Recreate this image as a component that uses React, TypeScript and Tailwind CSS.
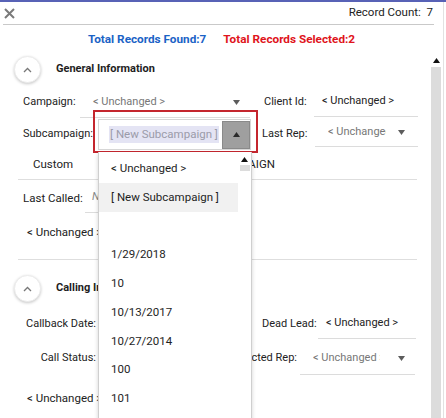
import React from "react"

function DownCaret() {
  return (
    <svg width="7" height="5" viewBox="0 0 7 5" className="shrink-0">
      <path d="M0 0h7L3.5 5z" fill="#5c5c5c" />
    </svg>
  )
}

function UpCaret({ color = "#222" }: { color?: string }) {
  return (
    <svg width="7" height="5" viewBox="0 0 7 5" className="shrink-0">
      <path d="M0 5h7L3.5 0z" fill={color} />
    </svg>
  )
}

function SectionHeader({ title }: { title: string }) {
  return (
    <div className="flex h-[27px] items-center pl-[14px]">
      <div className="flex h-[27px] w-[27px] items-center justify-center rounded-full border border-[#ececec] bg-white shadow-[0_1px_3px_rgba(0,0,0,0.22)]">
        <svg width="9" height="6" viewBox="0 0 9 6">
          <path d="M1 5l3.5-3.5L8 5" fill="none" stroke="#777" strokeWidth="1.3" />
        </svg>
      </div>
      <span className="ml-[15px] text-[11px] font-bold text-[#1e1e1e]">{title}</span>
    </div>
  )
}

const items = [
  "< Unchanged >",
  "[ New Subcampaign ]",
  "",
  "1/29/2018",
  "10",
  "10/13/2017",
  "10/27/2014",
  "100",
  "101",
]

export default function App() {
  return (
    <div className="relative flex h-[418px] w-[446px] overflow-hidden border-t-2 border-[#5862b6] bg-white font-['Roboto','Liberation_Sans',sans-serif] text-[11px] text-[#222]">
      <div className="flex w-[444px] flex-col border-r border-[#e2e2e2]">
        {/* Header */}
        <div className="mx-[3px] flex h-[23px] w-[431px] shrink-0 items-center justify-between border-b border-[#c9c9c9] pl-[1px]">
          <svg width="11" height="11" viewBox="0 0 11 11">
            <path d="M1 1l9 9M10 1l-9 9" stroke="#7a7a7a" strokeWidth="2" />
          </svg>
          <span className="pr-[1px] text-[11.5px] text-[#222]">Record Count:&nbsp; 7</span>
        </div>

        {/* Summary */}
        <div className="flex h-[28px] shrink-0 items-center justify-center gap-[17px] pt-[1px] text-[11.75px] font-bold">
          <span className="text-[#1b63c6]">Total Records Found:7</span>
          <span className="text-[#e0141c]">Total Records Selected:2</span>
        </div>

        <div className="flex min-h-0 flex-1">
          {/* Content */}
          <div className="w-[430px]">
            <div className="mt-[3px]">
              <SectionHeader title="General Information" />
            </div>

            {/* Campaign / Client Id */}
            <div className="mt-[4px] flex h-[31px] items-stretch">
              <div className="flex w-[80px] items-center pl-[23px]">Campaign:</div>
              <div className="flex w-[170px] items-center justify-between border-b border-[#dcdcdc] pl-[13px] pr-[10px] text-[#777]">
                <span>&lt; Unchanged &gt;</span>
                <DownCaret />
              </div>
              <div className="ml-[14px] flex w-[50px] items-center">Client Id:</div>
              <div className="mb-[1px] flex w-[104px] items-center border-b border-[#dcdcdc] pl-[8px]">
                &lt; Unchanged &gt;
              </div>
            </div>

            {/* Subcampaign / Last Rep */}
            <div className="flex h-[32px] items-stretch">
              <div className="flex w-[98px] items-center pl-[23px]">Subcampaign:</div>
              <div className="relative mt-[1px] flex w-[153px] items-center border border-[#d6d6d6] bg-white">
                <div className="absolute -left-[6px] -top-[10px] h-[43px] w-[165px] border-2 border-[#c4262e]" />
                <div className="flex flex-1 items-center pl-[10px]">
                  <span className="bg-[#e4e4f4] px-[1px] text-[11.5px] text-[#9b9ba9]">[ New Subcampaign ]</span>
                </div>
                <div className="flex h-[28px] w-[28px] items-center justify-center border border-[#8a8a8a] bg-[#9f9f9f]">
                  <UpCaret color="#2a2a2a" />
                </div>
              </div>
              <div className="ml-[11px] flex w-[53px] items-center">Last Rep:</div>
              <div className="mb-[3px] flex w-[103px] items-center justify-between border-b border-[#dcdcdc] pl-[13px] pr-[13px] text-[#777]">
                <span className="w-[58px] overflow-hidden whitespace-nowrap">&lt; Unchanged &gt;</span>
                <DownCaret />
              </div>
            </div>

            {/* Custom */}
            <div className="ml-[18px] flex h-[30px] w-[399px] items-center border-b border-[#dedede] pt-[1px] text-[11.5px]">
              <span className="w-[186px] pl-[15px]">Custom</span>
              <span className="w-[71px] text-right">CAMPAIGN</span>
            </div>

            {/* Last Called */}
            <div className="flex h-[34px] items-stretch pt-[3px]">
              <div className="flex w-[85px] items-center pl-[23px] text-[11.5px]">Last Called:</div>
              <div className="mb-[1px] flex w-[167px] items-center border-b border-[#dcdcdc] pl-[7px] italic text-[#888]">
                Not Called
              </div>
            </div>

            <div className="ml-[18px] h-[46px] w-[399px] border-b border-[#dedede] pl-[9px] pt-[10px] text-[11.5px]">
              &lt; Unchanged &gt;
            </div>

            <div className="mt-[15px]">
              <SectionHeader title="Calling Information" />
            </div>

            {/* Callback Date / Dead Lead */}
            <div className="mt-[6px] flex h-[32px] items-stretch">
              <div className="flex w-[96px] items-center justify-end">Callback Date:</div>
              <div className="w-[166px]" />
              <div className="flex w-[56px] items-center">Dead Lead:</div>
              <div className="mb-[1px] flex w-[98px] items-center border-b border-[#dcdcdc] pl-[8px]">
                &lt; Unchanged &gt;
              </div>
            </div>

            {/* Call Status / Selected Rep */}
            <div className="mt-[2px] flex h-[33px] items-stretch">
              <div className="flex w-[96px] items-center justify-end">Call Status:</div>
              <div className="flex w-[201px] items-center justify-end">Selected Rep:</div>
              <div className="ml-[3px] flex w-[115px] items-center justify-between border-b border-[#dcdcdc] pl-[13px] pr-[10px] text-[#777]">
                <span className="w-[67px] overflow-hidden whitespace-nowrap">&lt; Unchanged &gt;</span>
                <DownCaret />
              </div>
            </div>

            <div className="pl-[27px] pt-[15px] text-[11.5px]">&lt; Unchanged &gt;</div>
          </div>

          {/* Scrollbar */}
          <div className="flex w-[12px] flex-col items-center pt-[1px]">
            <div className="flex h-[12px] w-[12px] items-center justify-center">
              <UpCaret color="#111" />
            </div>
            <div className="mt-[1px] w-[10px] flex-1 bg-[#dcdcdc]" />
          </div>
        </div>
      </div>

      {/* Open subcampaign list */}
      <div className="absolute left-[98px] top-[150px] flex h-[280px] w-[154px] border-x border-[#cfcfcf] bg-white shadow-[0_2px_4px_rgba(0,0,0,0.18)]">
        <div className="w-[139px] pt-[2px]">
          {items.map((item, i) => (
            <div
              key={i}
              className={`flex h-[28.8px] items-center pl-[12px] text-[11.5px] text-[#1e1e1e] ${
                i === 1 ? "bg-[#f1f1f1]" : ""
              }`}
            >
              {item}
            </div>
          ))}
        </div>
        <div className="flex w-[13px] flex-col items-center pt-[5px]">
          <UpCaret color="#111" />
          <div className="mt-[3px] h-[6px] w-[10px] bg-[#dcdcdc]" />
        </div>
      </div>
    </div>
  )
}
